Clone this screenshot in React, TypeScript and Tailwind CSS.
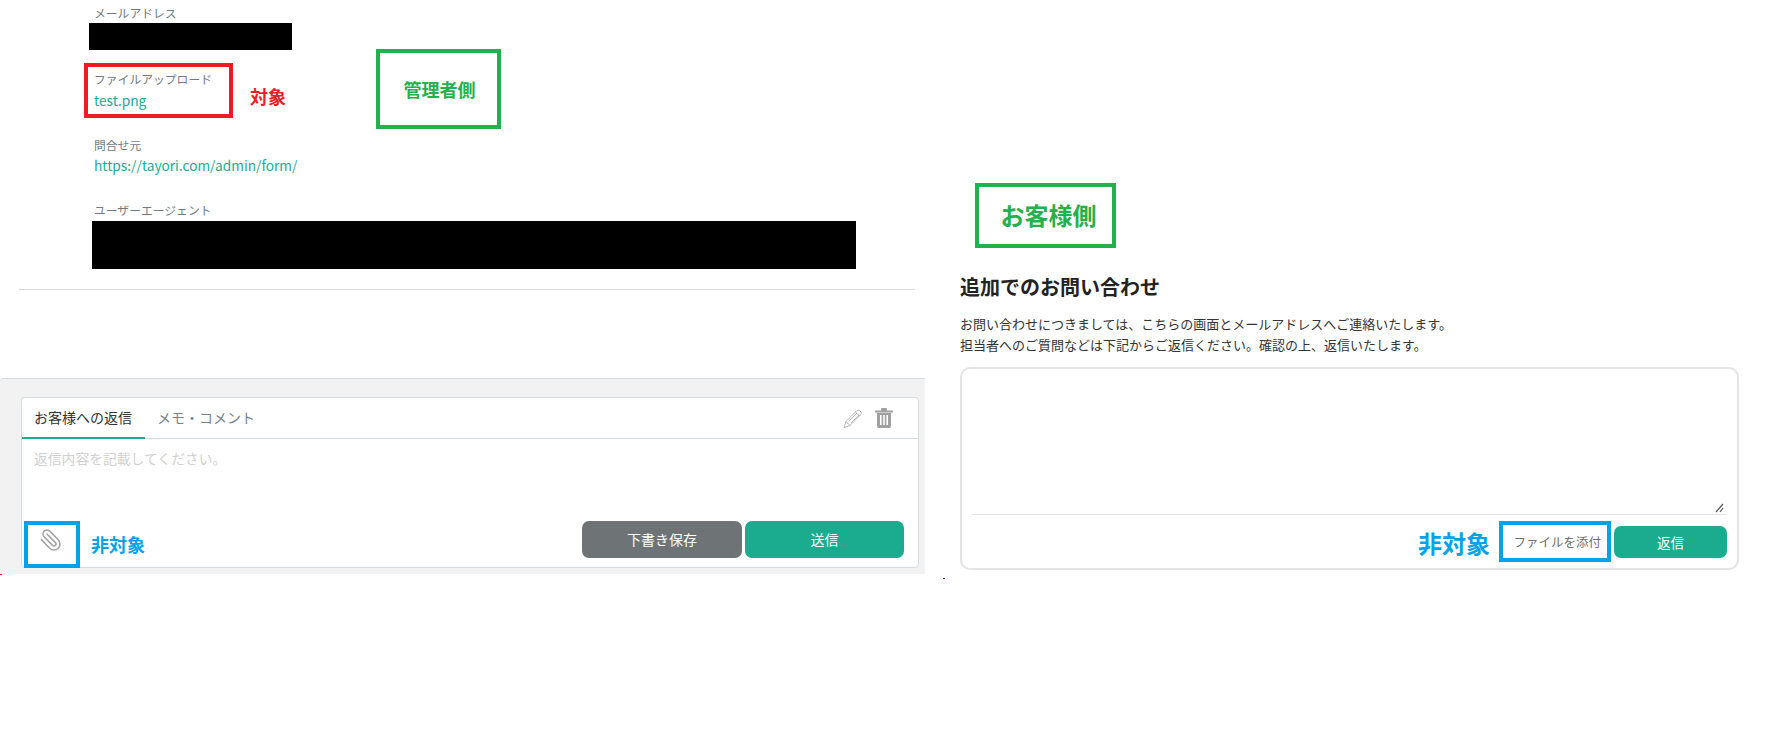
import React from 'react';
import { Paperclip } from 'lucide-react';

const FONT = "font-['Noto_Sans_CJK_JP','Noto_Sans',sans-serif]";

const Label: React.FC<{ text: string; className?: string }> = ({ text, className = '' }) => (
    <div className={`h-[17px] pl-[5px] text-[11.8px] leading-[17px] text-[#6f7b80] ${className}`}>{text}</div>
);

const Value: React.FC<{ text: string; className?: string }> = ({ text, className = '' }) => (
    <div className={`h-[20px] pl-[5px] text-[13.7px] leading-[20px] text-[#1bab8f] ${className}`}>{text}</div>
);

const PencilIcon = () => (
    <svg width="20" height="21" viewBox="0 0 20 20" fill="none" stroke="#aeaeae" strokeWidth="0.9">
        <path d="M1 19 3 13 13.5 2.5Q15 1 16.5 2L18 3.5Q19 5 17.5 6.5L7 17Z" />
        <path d="M3 13 7 17M5.5 13 14 4.5M8 14.5 16 6.5M12.5 3.5 16.5 7.5" />
    </svg>
);

const TrashIcon = () => (
    <svg width="18" height="20" viewBox="0 0 18 20">
        <rect x="0" y="2.5" width="18" height="2" fill="#a0a0a0" />
        <rect x="6" y="0" width="6" height="3" rx="1" fill="#a0a0a0" />
        <path d="M2 5h14v13a2 2 0 0 1-2 2H4a2 2 0 0 1-2-2z" fill="#a0a0a0" />
        <rect x="5" y="7" width="1.6" height="10" fill="#fff" />
        <rect x="8.2" y="7" width="1.6" height="10" fill="#fff" />
        <rect x="11.4" y="7" width="1.6" height="10" fill="#fff" />
    </svg>
);

const ResizeHandle = () => (
    <svg width="9" height="10" viewBox="0 0 9 10" className="absolute right-[3px] bottom-[1px]">
        <path d="M1 9 8 1M5 9 8 5" stroke="#555" strokeWidth="1.2" />
    </svg>
);

const AdminSide = () => (
    <div className="flex w-[925px] flex-col">
        <div className="h-[378px] pt-[4px]">
            <div className="pl-[89px]">
                <Label text="メールアドレス" />
                <div className="mt-[2px] h-[27px] w-[203px] bg-black" />
                <Label text="ファイルアップロード" className="mt-[20px]" />
                <Value text="test.png" className="mt-[3px]" />
                <Label text="問合せ元" className="mt-[26px]" />
                <Value text="https://tayori.com/admin/form/" className="mt-[2px]" />
                <Label text="ユーザーエージェント" className="mt-[26px]" />
            </div>
            <div className="mt-[3px] ml-[92px] h-[48px] w-[764px] bg-black" />
            <div className="mt-[20px] ml-[19px] h-px w-[896px] bg-[#d9d9d9]" />
        </div>
        <div className="h-[196px] rounded-tl-[4px] border-t border-[#d5dbdf] bg-[#f2f2f2] pt-[18px] pr-[6px] pl-[21px]">
            <div className="flex h-[171px] flex-col rounded-[4px] border border-[#d5dbdf] bg-white">
                <div className="flex h-[41px] items-stretch border-b border-[#d5dbdf]">
                    <div className="-mb-px flex w-[123px] items-center justify-center border-b-2 border-[#1bab8f] pr-[1px] pb-[1px] text-[14px] text-[#333]">
                        お客様への返信
                    </div>
                    <div className="ml-[12px] flex items-center pb-[1px] text-[14px] text-[#75848f]">メモ・コメント</div>
                    <div className="ml-auto flex items-center gap-[12px] pr-[25px]">
                        <PencilIcon />
                        <TrashIcon />
                    </div>
                </div>
                <div className="flex-1 pt-[9px] pl-[12px] text-[13.8px] leading-[20px] text-[#d0d0d0]">
                    返信内容を記載してください。
                </div>
                <div className="flex items-center justify-between pr-[14px] pb-[9px] pl-[17px]">
                    <Paperclip size={24} strokeWidth={1.6} className="-scale-x-100 text-[#a4a4a4]" />
                    <div className="flex gap-[3px]">
                        <div className="flex h-[37px] w-[160px] items-center justify-center rounded-[7px] bg-[#6e7476] text-[14px] text-white">
                            下書き保存
                        </div>
                        <div className="flex h-[37px] w-[159px] items-center justify-center rounded-[7px] bg-[#1bab8f] text-[14px] text-white">
                            送信
                        </div>
                    </div>
                </div>
            </div>
        </div>
    </div>
);

const CustomerSide = () => (
    <div className="ml-[35px] w-[779px] pt-[275px]">
        <h2 className="text-[20px] leading-[24px] font-bold text-[#222]">追加でのお問い合わせ</h2>
        <p className="mt-[14px] text-[13px] leading-[21px] text-[#333]">
            お問い合わせにつきましては、こちらの画面とメールアドレスへご連絡いたします。
            <br />
            担当者へのご質問などは下記からご返信ください。確認の上、返信いたします。
        </p>
        <div className="mt-[12px] flex h-[203px] w-[779px] flex-col rounded-[10px] border-2 border-[#e4e4e4] px-[10px]">
            <div className="relative h-[146px] border-b border-[#e4e4e4]">
                <ResizeHandle />
            </div>
            <div className="flex justify-end pt-[11px]">
                <div className="flex h-[32px] items-center pr-[13px] text-[12.5px] text-[#6e6e6e]">ファイルを添付</div>
                <div className="flex h-[32px] w-[113px] items-center justify-center rounded-[7px] bg-[#1bab8f] text-[13.5px] text-white">
                    返信
                </div>
            </div>
        </div>
    </div>
);

const App: React.FC = () => (
    <div className={`relative flex h-[746px] w-[1772px] overflow-hidden bg-white ${FONT}`}>
        <AdminSide />
        <CustomerSide />

        {/* annotations pasted over the two screenshots */}
        <div className="absolute top-[63px] left-[84px] h-[55px] w-[149px] border-4 border-[#ed1c24]" />
        <div className="absolute top-[84px] left-[250px] text-[18px] leading-[24px] font-bold text-[#ed1c24]">対象</div>
        <div className="absolute top-[49px] left-[376px] flex h-[80px] w-[125px] items-center justify-center border-4 border-[#22b14c] pl-[2px] text-[18px] font-bold text-[#22b14c]">
            管理者側
        </div>
        <div className="absolute top-[183px] left-[975px] flex h-[65px] w-[141px] items-center justify-center border-4 border-[#22b14c] pb-[1px] pl-[6px] text-[24px] font-bold text-[#22b14c]">
            お客様側
        </div>
        <div className="absolute top-[521px] left-[24px] h-[47px] w-[56px] border-4 border-[#00a2e8]" />
        <div className="absolute top-[532px] left-[91px] text-[18px] leading-[24px] font-bold text-[#00a2e8]">非対象</div>
        <div className="absolute top-[527px] left-[1418px] text-[24px] leading-[32px] font-bold text-[#00a2e8]">非対象</div>
        <div className="absolute top-[521px] left-[1499px] h-[41px] w-[112px] border-4 border-[#00a2e8]" />
        <div className="absolute top-[574px] left-0 h-px w-[2px] bg-[#ed1c24]" />
        <div className="absolute top-[578px] left-[943px] h-px w-[2px] bg-[#a0006e]" />
    </div>
);

export default App;
